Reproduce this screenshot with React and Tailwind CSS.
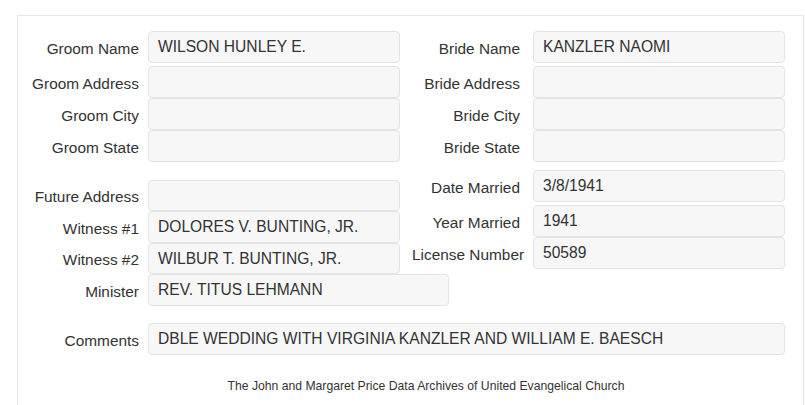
import React from 'react';

const Field = ({ label, value = '', labelW, gap, inputW = 'w-[252px]', h = 'h-[32px]', className = '' }) => (
  <div className={`flex items-center ${className}`}>
    <div className={`${labelW} shrink-0 text-right whitespace-nowrap pt-[3px] text-[15.4px]`}>{label}</div>
    <div className={`${gap} ${inputW} ${h} shrink-0 flex items-center px-[9px] bg-[#f7f7f7] border border-[#e3e3e3] rounded-[4px] text-[15.6px]`}>
      {value}
    </div>
  </div>
);

const left = { labelW: 'w-[121px]', gap: 'ml-[9px]' };
const right = { labelW: 'w-[108px]', gap: 'ml-[13px]' };

export default function App() {
  return (
    <div className="bg-white h-[405px] overflow-hidden font-['Liberation_Sans',Arial,sans-serif] text-[15px] text-[#333]">
      <div className="ml-[17px] mt-[15px] w-[787px] h-[400px] border border-[#e6e6e6] border-b-0">
        {/* names / addresses */}
        <div className="flex pt-[15px]">
          <div className="w-[394px]">
            <Field label="Groom Name" value="WILSON HUNLEY E." {...left} className="mb-[3px]" />
            <Field label="Groom Address" {...left} />
            <Field label="Groom City" {...left} />
            <Field label="Groom State" {...left} />
          </div>
          <div>
            <Field label="Bride Name" value="KANZLER NAOMI" {...right} className="mb-[3px]" />
            <Field label="Bride Address" {...right} />
            <Field label="Bride City" {...right} />
            <Field label="Bride State" {...right} />
          </div>
        </div>

        {/* witnesses / marriage */}
        <div className="flex">
          <div className="w-[394px] pt-[18px]">
            <Field label="Future Address" {...left} h="h-[31px]" />
            <Field label="Witness #1" value="DOLORES V. BUNTING, JR." {...left} />
            <Field label="Witness #2" value="WILBUR T. BUNTING, JR." {...left} h="h-[31px]" />
            <Field label="Minister" value="REV. TITUS LEHMANN" {...left} inputW="w-[301px]" />
          </div>
          <div className="pt-[8px]">
            <Field label="Date Married" value="3/8/1941" {...right} className="mb-[3px]" />
            <Field label="Year Married" value="1941" {...right} />
            <Field label="License Number" value="50589" {...right} />
          </div>
        </div>

        <Field label="Comments" value="DBLE WEDDING WITH VIRGINIA KANZLER AND WILLIAM E. BAESCH" {...left} inputW="w-[637px]" className="mt-[17px]" />

        <div className="mt-[23px] w-[816px] text-center text-[12.2px] leading-[16px]">
          The John and Margaret Price Data Archives of United Evangelical Church
        </div>
      </div>
    </div>
  );
}
